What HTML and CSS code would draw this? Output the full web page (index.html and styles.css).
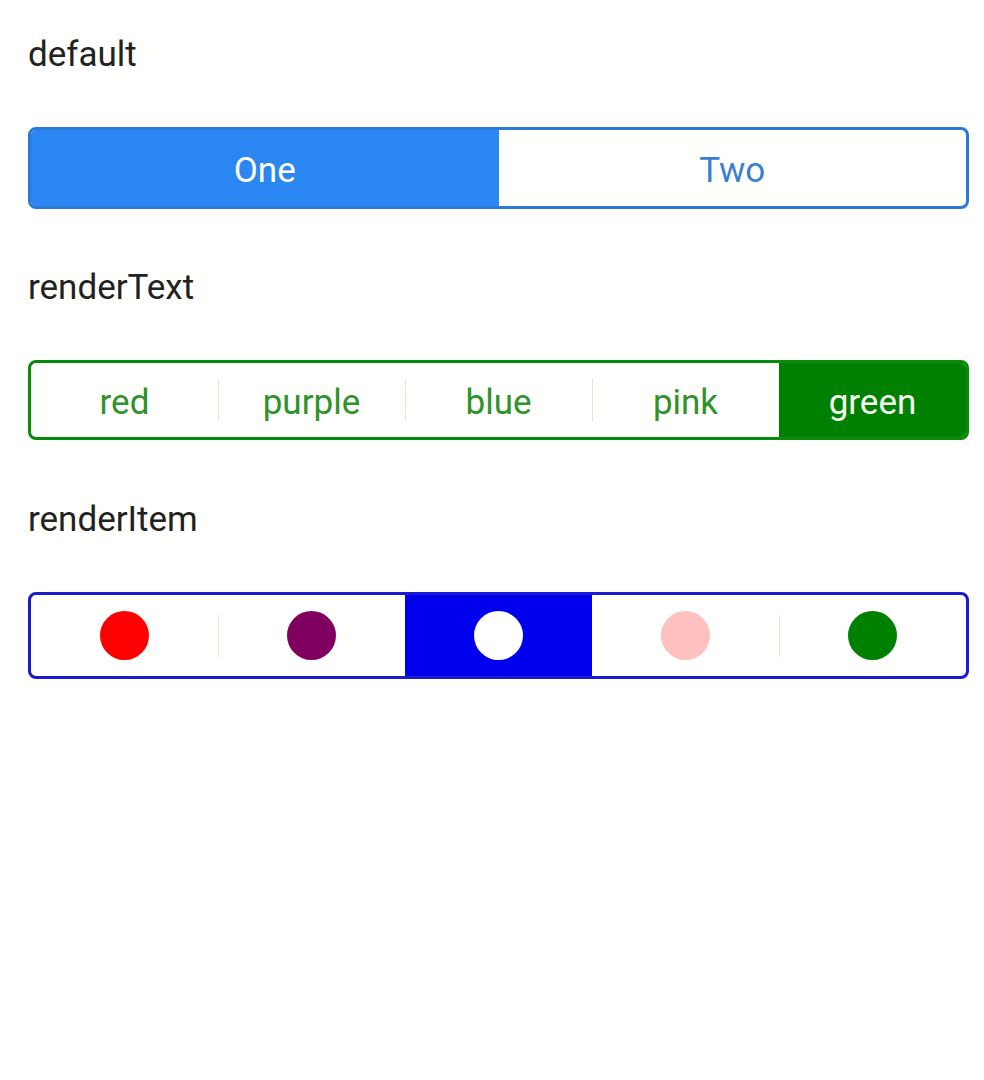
FILE: index.html
```html
<!DOCTYPE html>
<html>
<head>
<meta charset="utf-8">
<link rel="stylesheet" href="styles.css">
</head>
<body>
<div class="page">
  <div class="label">default</div>
  <div class="seg seg-default">
    <div class="item active">One</div>
    <div class="item">Two</div>
  </div>

  <div class="label">renderText</div>
  <div class="seg seg-text">
    <div class="item">red</div>
    <div class="item sep">purple</div>
    <div class="item sep">blue</div>
    <div class="item sep">pink</div>
    <div class="item active">green</div>
  </div>

  <div class="label">renderItem</div>
  <div class="seg seg-item">
    <div class="item"><span class="dot red"></span></div>
    <div class="item sep"><span class="dot purple"></span></div>
    <div class="item active"><span class="dot white"></span></div>
    <div class="item"><span class="dot pink"></span></div>
    <div class="item sep"><span class="dot green"></span></div>
  </div>
</div>
</body>
</html>
```

FILE: styles.css
```css
html, body {
  margin: 0;
  padding: 0;
  background: #fffffd;
}
.page {
  padding: 34px 15px 0 28px;
  font-family: Roboto, "Liberation Sans", sans-serif;
}
.label {
  font-size: 35px;
  color: #222;
  line-height: 42px;
  height: 42px;
  margin-bottom: 51px;
}
.seg {
  display: flex;
  box-sizing: border-box;
  border: 3px solid;
  border-radius: 8px;
  overflow: hidden;
  margin-bottom: 58px;
}
.item {
  flex: 1;
  display: flex;
  align-items: center;
  justify-content: center;
  position: relative;
}
.item.sep::before {
  content: "";
  position: absolute;
  left: 0;
  top: 50%;
  height: 42px;
  margin-top: -21px;
  border-left: 1px solid #e6e6d2;
}
.seg-default {
  height: 82px;
  border-color: #2b7ad8;
  color: #3a80d2;
  font-size: 35px;
}
.seg-default .item,
.seg-text .item {
  padding-top: 4px;
}
.seg-default .active {
  background: #2a86f0;
  color: #ffffff;
}
.seg-text {
  height: 80px;
  border-color: #0a8a0a;
  color: #2f922a;
  font-size: 35px;
  margin-bottom: 59px;
}
.seg-text .active {
  background: #008000;
  color: #f4fff0;
}
.seg-item {
  height: 87px;
  border-color: #1a1ad0;
}
.seg-item .active {
  background: #0000ee;
}
.dot {
  width: 49px;
  height: 49px;
  border-radius: 50%;
  display: block;
}
.dot.red { background: #ff0000; }
.dot.purple { background: #800060; }
.dot.white { background: #ffffff; }
.dot.pink { background: #ffc0c0; }
.dot.green { background: #008000; }
```
